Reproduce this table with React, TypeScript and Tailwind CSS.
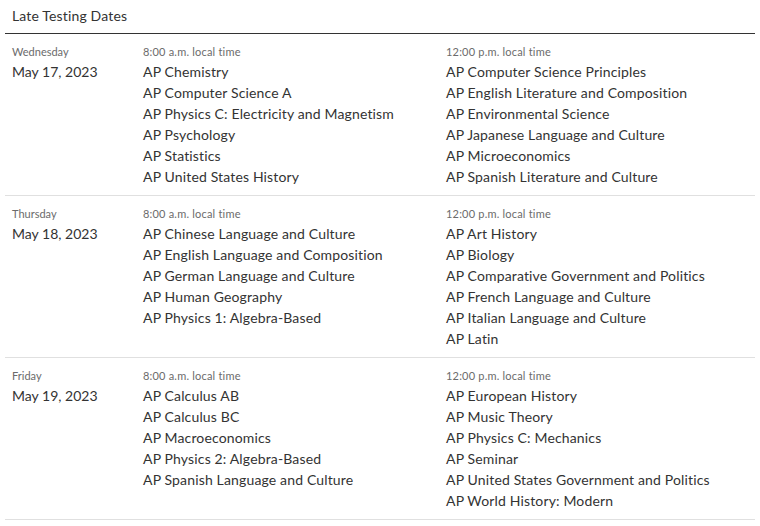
const days = [
  {
    day: "Wednesday",
    date: "May 17, 2023",
    morning: [
      "AP Chemistry",
      "AP Computer Science A",
      "AP Physics C: Electricity and Magnetism",
      "AP Psychology",
      "AP Statistics",
      "AP United States History",
    ],
    noon: [
      "AP Computer Science Principles",
      "AP English Literature and Composition",
      "AP Environmental Science",
      "AP Japanese Language and Culture",
      "AP Microeconomics",
      "AP Spanish Literature and Culture",
    ],
  },
  {
    day: "Thursday",
    date: "May 18, 2023",
    morning: [
      "AP Chinese Language and Culture",
      "AP English Language and Composition",
      "AP German Language and Culture",
      "AP Human Geography",
      "AP Physics 1: Algebra-Based",
    ],
    noon: [
      "AP Art History",
      "AP Biology",
      "AP Comparative Government and Politics",
      "AP French Language and Culture",
      "AP Italian Language and Culture",
      "AP Latin",
    ],
  },
  {
    day: "Friday",
    date: "May 19, 2023",
    morning: [
      "AP Calculus AB",
      "AP Calculus BC",
      "AP Macroeconomics",
      "AP Physics 2: Algebra-Based",
      "AP Spanish Language and Culture",
    ],
    noon: [
      "AP European History",
      "AP Music Theory",
      "AP Physics C: Mechanics",
      "AP Seminar",
      "AP United States Government and Politics",
      "AP World History: Modern",
    ],
  },
];

function Column({ time, exams }: { time: string; exams: string[] }) {
  return (
    <div>
      <div className="text-[11px] leading-[18px] tracking-[0.2px] text-[#6b6b6b]">{time}</div>
      {exams.map((e) => (
        <div key={e} className="text-[14px] leading-[21px] tracking-[0.15px] text-[#333]">
          {e}
        </div>
      ))}
    </div>
  );
}

export default function App() {
  return (
    <div
      className="w-[760px] h-[526px] bg-white px-[5px]"
      style={{ fontFamily: "Lato, 'Open Sans', sans-serif" }}
    >
      {/* Title */}
      <div className="px-[7px] pt-[6px] pb-[8px] text-[14px] leading-[19px] tracking-[0.15px] text-[#333] border-b border-[#333]">
        Late Testing Dates
      </div>

      {days.map((d) => (
        <div
          key={d.date}
          className="grid grid-cols-[131px_303px_1fr] pl-[7px] pt-[9px] pb-2 border-b border-[#e0e0e0]"
        >
          <div>
            <div className="text-[11px] leading-[18px] text-[#6b6b6b]">{d.day}</div>
            <div className="text-[14px] leading-[21px] text-[#333]">{d.date}</div>
          </div>
          <Column time="8:00 a.m. local time" exams={d.morning} />
          <Column time="12:00 p.m. local time" exams={d.noon} />
        </div>
      ))}
    </div>
  );
}
